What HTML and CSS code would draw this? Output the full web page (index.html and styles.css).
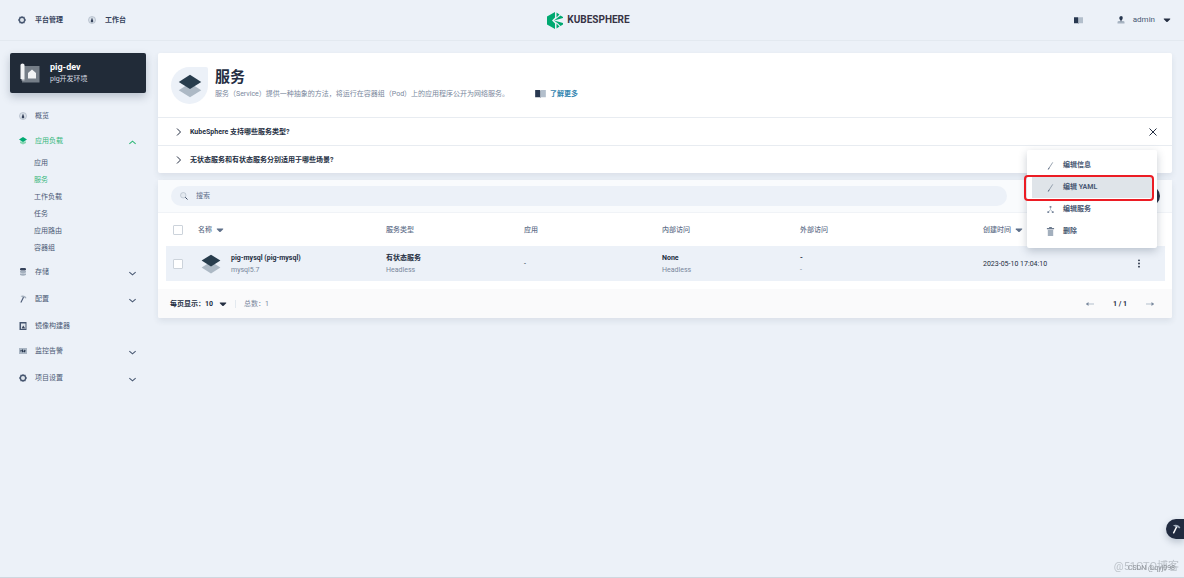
FILE: index.html
```
<!DOCTYPE html>
<html lang="zh-CN">
<head>
<meta charset="utf-8">
<title>服务 - KubeSphere</title>
<link rel="stylesheet" href="styles.css">
</head>
<body>
<svg class="defs" width="0" height="0" aria-hidden="true">
  <symbol id="gear" viewBox="0 0 16 16"><path d="M8 0l2 1.500 3 .2.700 3L15.500 7v2l-1.800 2.300-.7 3-3 .2L8 16l-2-1.500-3-.2-.7-3L.5 9V7l1.800-2.300.7-3 3-.2z" fill="#465670"/><circle cx="8" cy="8" r="4" fill="#dfe5ec"/></symbol>
  <symbol id="dash" viewBox="0 0 16 16"><circle cx="8" cy="8" r="7" fill="#dbe2ea" stroke="#a3afbd" stroke-width="1.200"/><path d="M8 3l2 5.500a2.600 2.600 0 1 1-4 0z" fill="#36435c"/></symbol>
  <symbol id="layers" viewBox="0 0 32 32"><path d="M16 12L31 21.500 16 31 1 21.500z" fill="#adb9c5"/><path d="M16 1l15 9.500L16 20 1 10.500z" fill="#283d4d"/></symbol>
  <symbol id="layers-green" viewBox="0 0 16 16"><path d="M2 9h12v3l-6 3-6-3z" fill="#86d5b1"/><path d="M8 0l8 5-8 5-8-5z" fill="#00aa72"/></symbol>
  <symbol id="db" viewBox="0 0 16 16"><rect x="2" y="0" width="12" height="5" rx="2.500" fill="#36435c"/><path d="M2 6h12v3q-6 3-12 0zM2 11h12v3q-6 3-12 0z" fill="#a3afbd"/></symbol>
  <symbol id="hammer" viewBox="0 0 16 16"><path d="M3 2q5-2 10 1l2 3-2 1-2-2-2 1z" fill="#a3afbd"/><path d="M8 4l2 1-5 10q-2 1-2-1z" fill="currentColor"/></symbol>
  <symbol id="image" viewBox="0 0 16 16"><path d="M1 0h14v16H1z" fill="#465670"/><path d="M4 3h9v11H4z" fill="#dfe5ec"/><path d="M5 13l3.500-6 4 6z" fill="#36435c"/></symbol>
  <symbol id="monitor" viewBox="0 0 16 16"><path d="M0 2h16v12H0z" fill="#a9b5c3"/><path d="M2 7h3l2-3 2 5 2-4 1 2h2l-3 4-2-2-2 2-2-3-3 1z" fill="#283850"/></symbol>
  <symbol id="down" viewBox="0 0 10 10"><path d="M1.500 3.500L5 6.500l3.500-3" fill="none" stroke="#465670" stroke-width="1.200"/></symbol>
  <symbol id="up" viewBox="0 0 10 10"><path d="M1.500 6.500L5 3.500l3.500 3" fill="none" stroke="#2fb877" stroke-width="1.200"/></symbol>
  <symbol id="right" viewBox="0 0 10 10"><path d="M3 1.500L6.500 5 3 8.500" fill="none" stroke="#242e42"/></symbol>
  <symbol id="caret" viewBox="0 0 10 10"><path d="M1 3h8v1L5.500 7.500h-1L1 4z" fill="currentColor"/></symbol>
  <symbol id="book" viewBox="0 0 16 12"><path d="M0 0h7l1 1v11l-1-1H0z" fill="#283850"/><path d="M16 0H9L8 1v11l1-1h7z" fill="#b3bfcc"/></symbol>
  <symbol id="pen" viewBox="0 0 10 10"><path d="M3 8.500L7.500 1.500" fill="none" stroke="#8c98a7"/><path d="M2.500 9.500l1-2" stroke="#4a5974"/></symbol>
</svg>

<header class="topbar">
  <nav class="top-nav">
    <a href="#"><svg class="ic"><use href="#gear"/></svg>平台管理</a>
    <a href="#"><svg class="ic"><use href="#dash"/></svg>工作台</a>
  </nav>
  <a class="logo" href="#" aria-label="KubeSphere">
    <svg class="logo-mark" viewBox="0 0 32 34"><path d="M16 0v11L10 17l6 6v11L0 25V9z" fill="#00a971"/><path d="M19 1l6 4-6 6zM27 7l5 3v2l-18 5 9-7zM14 17l18 5v3l-5 3-5-5zM19 23l6 6-6 4z" fill="#00a971"/></svg>
    <span>KUBESPHERE</span>
  </a>
  <div class="top-user">
    <svg class="book"><use href="#book"/></svg>
    <button class="user" type="button">
      <svg class="ic" viewBox="0 0 16 16"><path d="M1 15v-3q0-2 3-2h8q3 0 3 2v3z" fill="#a8b4c2"/><path d="M8 0q4 0 3.500 4T9 8.500v2H7v-2Q4.500 7 4.500 4T8 0z" fill="#283850"/></svg>
      <span>admin</span>
      <svg class="caret"><use href="#caret"/></svg>
    </button>
  </div>
</header>

<div class="layout">
  <aside class="sidebar">
    <button class="project" type="button">
      <svg class="project-icon" viewBox="0 0 40 40"><path d="M8 6h31v33H4z" fill="#757e88"/><path d="M1 4q0-3 4-3t4 3v28H1z" fill="#f1f3f5"/><path d="M3 32h6v3H3z" fill="#c2c7cc"/><path d="M16 31V20l8-7 8 7v11z" fill="#f1f3f5"/></svg>
      <span class="project-text"><strong>pig-dev</strong><span>pig开发环境</span></span>
    </button>
    <nav class="menu">
      <a class="item" href="#"><svg class="ic"><use href="#dash"/></svg>概览</a>
      <a class="item open active" href="#"><svg class="ic"><use href="#layers-green"/></svg>应用负载<svg class="arrow"><use href="#up"/></svg></a>
      <div class="submenu">
        <a href="#">应用</a>
        <a class="active" href="#">服务</a>
        <a href="#">工作负载</a>
        <a href="#">任务</a>
        <a href="#">应用路由</a>
        <a href="#">容器组</a>
      </div>
      <a class="item open" href="#"><svg class="ic"><use href="#db"/></svg>存储<svg class="arrow"><use href="#down"/></svg></a>
      <a class="item open" href="#"><svg class="ic"><use href="#hammer"/></svg>配置<svg class="arrow"><use href="#down"/></svg></a>
      <a class="item" href="#"><svg class="ic"><use href="#image"/></svg>镜像构建器</a>
      <a class="item open" href="#"><svg class="ic"><use href="#monitor"/></svg>监控告警<svg class="arrow"><use href="#down"/></svg></a>
      <a class="item open" href="#"><svg class="ic"><use href="#gear"/></svg>项目设置<svg class="arrow"><use href="#down"/></svg></a>
    </nav>
  </aside>

  <main class="content">
    <section class="banner">
      <div class="banner-head">
        <div class="banner-icon"><svg><use href="#layers"/></svg></div>
        <div class="banner-text">
          <h1>服务</h1>
          <p><span>服务（Service）提供一种抽象的方法，将运行在容器组（Pod）上的应用程序公开为网络服务。</span><a href="#"><svg class="book"><use href="#book"/></svg>了解更多</a></p>
        </div>
      </div>
      <div class="tip">
        <button class="tip-title" type="button"><svg><use href="#right"/></svg>KubeSphere 支持哪些服务类型?</button>
        <button class="close" type="button" aria-label="关闭"><svg viewBox="0 0 10 10"><path d="M1.500 1.500l7 7M8.500 1.500l-7 7" fill="none" stroke="#242e42"/></svg></button>
      </div>
      <div class="tip">
        <button class="tip-title" type="button"><svg><use href="#right"/></svg>无状态服务和有状态服务分别适用于哪些场景?</button>
      </div>
    </section>

    <section class="list">
      <div class="toolbar">
        <label class="search">
          <svg class="ic" viewBox="0 0 16 16"><circle cx="6.500" cy="6.500" r="5.500" fill="#e3e9f0" stroke="#a9b5c3" stroke-width="1.200"/><path d="M10.500 10.500l4.500 4.500" stroke="#36435c" stroke-width="2"/></svg>
          <input type="text" placeholder="搜索" aria-label="搜索">
        </label>
        <button class="create" type="button">创建</button>
      </div>
      <table>
        <colgroup><col class="c-check"><col class="c-name"><col class="c-mid"><col class="c-mid"><col class="c-mid"><col class="c-out"><col class="c-time"><col class="c-more"></colgroup>
        <thead>
          <tr><th><input type="checkbox" aria-label="全选"></th><th><span class="sort">名称<svg class="caret"><use href="#caret"/></svg></span></th><th>服务类型</th><th>应用</th><th>内部访问</th><th>外部访问</th><th><span class="sort">创建时间<svg class="caret"><use href="#caret"/></svg></span></th><th></th></tr>
        </thead>
        <tbody>
          <tr>
            <td><input type="checkbox" aria-label="选择 pig-mysql"></td>
            <td><div class="name"><svg><use href="#layers"/></svg><div class="pair"><strong>pig-mysql (pig-mysql)</strong><span>mysql5.7</span></div></div></td>
            <td><div class="pair"><strong>有状态服务</strong><span>Headless</span></div></td>
            <td>-</td>
            <td><div class="pair"><strong>None</strong><span>Headless</span></div></td>
            <td><div class="pair"><strong>-</strong><span>-</span></div></td>
            <td>2023-05-10 17:04:10</td>
            <td><button class="more" type="button" aria-label="更多操作"><svg viewBox="0 0 4 10"><circle cx="2" cy="1.500" r="1"/><circle cx="2" cy="5" r="1"/><circle cx="2" cy="8.500" r="1"/></svg></button></td>
          </tr>
        </tbody>
      </table>
      <footer class="pager">
        <button class="size" type="button">每页显示：10<svg class="caret"><use href="#caret"/></svg></button>
        <span class="total">总数：1</span>
        <div class="pages">
          <button type="button" aria-label="上一页"><svg viewBox="0 0 10 10"><path d="M1 5h8" stroke="#b3bfcc"/><path d="M3.500 3L1 5l2.500 2z" fill="#79879c"/></svg></button>
          <span>1 / 1</span>
          <button type="button" aria-label="下一页"><svg viewBox="0 0 10 10"><path d="M1 5h8" stroke="#b3bfcc"/><path d="M6.500 3L9 5 6.500 7z" fill="#79879c"/></svg></button>
        </div>
      </footer>
    </section>

    <div class="dropdown">
      <button type="button"><svg><use href="#pen"/></svg>编辑信息</button>
      <button class="hover" type="button"><svg><use href="#pen"/></svg>编辑 YAML</button>
      <button type="button"><svg viewBox="0 0 10 10"><path d="M5 2v3L2.500 8M5 5l2.500 3" fill="none" stroke="#b3bfcc"/><path d="M4 1h2v2H4zM1.500 7h2v2h-2zM6.500 7h2v2h-2z" fill="#79879c"/></svg>编辑服务</button>
      <button type="button"><svg viewBox="0 0 10 10"><path d="M2 3h6v7H2z" fill="#a3afbd"/><path d="M1 1h2.500V0h3v1H9v1.500H1z" fill="#6b7a8e"/></svg>删除</button>
      <div class="highlight"></div>
    </div>
  </main>
</div>

<button class="tool" type="button" aria-label="工具箱"><svg><use href="#hammer"/></svg></button>
<div class="mark mark-large">@51CTO博客</div>
<div class="mark mark-small">CSDN @qyj098</div>
</body>
</html>
```

FILE: styles.css
```
* { box-sizing: border-box; }
body {
  margin: 0;
  min-height: 100vh;
  background: #ecf1f8;
  border-bottom: 1px solid #cfd7df;
  color: #242e42;
  font: 7px/12px Roboto, "Noto Sans CJK SC", sans-serif;
}
a { color: inherit; text-decoration: none; }
button { margin: 0; padding: 0; border: 0; background: none; color: inherit; font: inherit; text-align: left; }
svg { display: block; flex: none; }
.defs { position: absolute; }
.ic { width: 8px; height: 8px; }
.caret { width: 8px; height: 8px; }
.book { width: 11px; height: 8px; }

.topbar {
  display: grid;
  grid-template-columns: 1fr auto 1fr;
  align-items: center;
  height: 41px;
  padding: 0 13px 0 6px;
  border-bottom: 1px solid #e3e9f0;
}
.top-nav { display: flex; gap: 25px; padding-left: 12px; font-weight: 700; color: #36435c; }
.top-nav a { display: flex; align-items: center; gap: 9px; }
.logo { display: flex; align-items: center; gap: 4px; font-size: 10px; font-weight: 700; color: #373345; }
.logo-mark { width: 16px; height: 17px; }
.top-user { display: flex; align-items: center; justify-content: flex-end; gap: 34px; }
.top-user .book { width: 9px; height: 7px; }
.user { display: flex; align-items: center; gap: 8px; font-size: 8px; color: #4a5974; }
.user .caret { color: #242e42; }

.layout { display: flex; gap: 12px; padding: 12px 12px 0 10px; }
.sidebar { flex: none; width: 136px; }
.project {
  display: flex;
  align-items: center;
  gap: 10px;
  width: 100%;
  height: 40px;
  padding: 0 10px;
  border-radius: 2px;
  background: #212b38;
  color: #fff;
  box-shadow: 0 4px 8px #24364e40;
}
.project-icon { width: 20px; height: 20px; }
.project-text { display: grid; }
.project-text strong { font-size: 9px; }
.project-text span { color: #d5dae0; }
.menu { margin-top: 10px; color: #4a5974; }
.item { display: flex; align-items: center; gap: 8px; height: 25px; padding: 0 9px; }
.item.open { height: 27px; padding-bottom: 2px; }
.arrow { width: 9px; height: 9px; margin: 3px 0 0 auto; }
.menu .active { color: #36b87c; }
.submenu { display: grid; padding: 0 0 2px 24px; line-height: 17px; }

.content { position: relative; flex: 1; min-width: 0; }
.banner { border-radius: 2px; background: #fff; box-shadow: 0 3px 6px #24364e17; }
.banner-head { display: flex; gap: 7px; height: 64px; padding: 14px 13px; }
.banner-icon { display: grid; place-items: center; width: 37px; height: 37px; border-radius: 50% 2px 50% 50%; background: #ecf1f8; }
.banner-icon svg { width: 24px; height: 24px; }
.banner-text h1 { margin: 0; font-size: 15px; line-height: 21px; }
.banner-text p { display: flex; margin: 0; color: #79879c; }
.banner-text p span { min-width: 310px; }
.banner-text a { display: flex; align-items: center; gap: 4px; margin-left: 10px; color: #3385b0; font-weight: 700; }
.tip { display: flex; align-items: center; justify-content: space-between; height: 28px; padding: 0 14px 0 16px; border-top: 1px solid #e8ecf1; }
.tip-title { display: flex; align-items: center; gap: 6px; font-weight: 700; }
.tip svg { width: 10px; height: 10px; }

.list { margin-top: 7px; border-radius: 2px; background: #fff; box-shadow: 0 3px 6px #24364e17; }
.toolbar { display: flex; align-items: center; justify-content: space-between; height: 33px; padding: 0 12px 0 13px; background: #f9fbfd; border-bottom: 1px solid #f0f3f7; }
.search { display: flex; align-items: center; gap: 8px; flex: 0 1 836px; height: 20px; padding: 0 9px; border-radius: 10px; background: #ecf1f8; }
.search input { flex: 1; min-width: 0; padding: 0; border: 0; outline: 0; background: none; font: inherit; }
.search input::placeholder { color: #5f708a; }
.create { width: 48px; height: 20px; border-radius: 10px; background: #242e42; color: #fff; text-align: center; font-weight: 700; }

table { width: calc(100% - 15px); margin: 0 7px 0 8px; border-collapse: collapse; table-layout: fixed; }
.c-check { width: 32px; }
.c-name { width: 188px; }
.c-mid { width: 138px; }
.c-out { width: 183px; }
.c-more { width: 32px; }
th, td { padding: 0; text-align: left; vertical-align: middle; }
th { height: 33px; color: #5f708a; font-weight: 500; }
td { height: 35px; background: #ecf1f8; }
.sort { display: flex; align-items: center; gap: 4px; }
table input { display: block; appearance: none; width: 10px; height: 10px; margin: 0 0 0 7px; border: 1px solid #ccd3db; border-radius: 1px; background: #fff; }
.name { display: flex; align-items: center; gap: 10px; padding-left: 3px; }
.name svg { width: 20px; height: 20px; }
.pair { display: grid; }
.pair span { color: #79879c; }
.more { display: block; padding: 4px; }
.more svg { width: 4px; height: 9px; fill: #242e42; }
.pager { display: flex; align-items: center; height: 29px; margin-top: 8px; padding: 0 17px 0 12px; background: #fafafb; border-radius: 0 0 2px 2px; }
.size { display: flex; align-items: center; gap: 6px; font-weight: 700; }
.total { margin-left: 8px; padding-left: 8px; border-left: 1px solid #e3e9ef; line-height: 8px; color: #79879c; }
.pages { display: flex; align-items: center; gap: 18px; margin-left: auto; font-weight: 700; }
.pages svg { width: 10px; height: 10px; }

.dropdown { position: absolute; top: 97px; right: 15px; width: 130px; padding: 4px 5px 6px; border-radius: 2px; background: #fff; box-shadow: 0 3px 9px #24364e40; }
.dropdown button { display: flex; align-items: center; gap: 8px; width: 100%; height: 22px; padding-left: 14px; font-weight: 700; color: #4a5974; }
.dropdown button.hover { background: #dfe4e9; }
.dropdown svg { width: 9px; height: 9px; }
.highlight { position: absolute; top: 25px; left: -3px; right: 3px; height: 26px; border: 2px solid #ec1c24; border-radius: 4px; }

.tool { position: fixed; right: 0; bottom: 39px; width: 18px; height: 20px; padding-left: 5px; border-radius: 10px 0 0 10px; background: #212b40; color: #fff; box-shadow: 0 3px 7px #24364e40; }
.tool svg { width: 10px; height: 10px; }
.mark { position: fixed; white-space: nowrap; }
.mark-large { right: 5px; bottom: 4px; font-size: 11px; line-height: 14px; color: #bdc3ca; }
.mark-small { right: 9px; bottom: 4px; font-size: 7px; color: #8b9096; }
```
